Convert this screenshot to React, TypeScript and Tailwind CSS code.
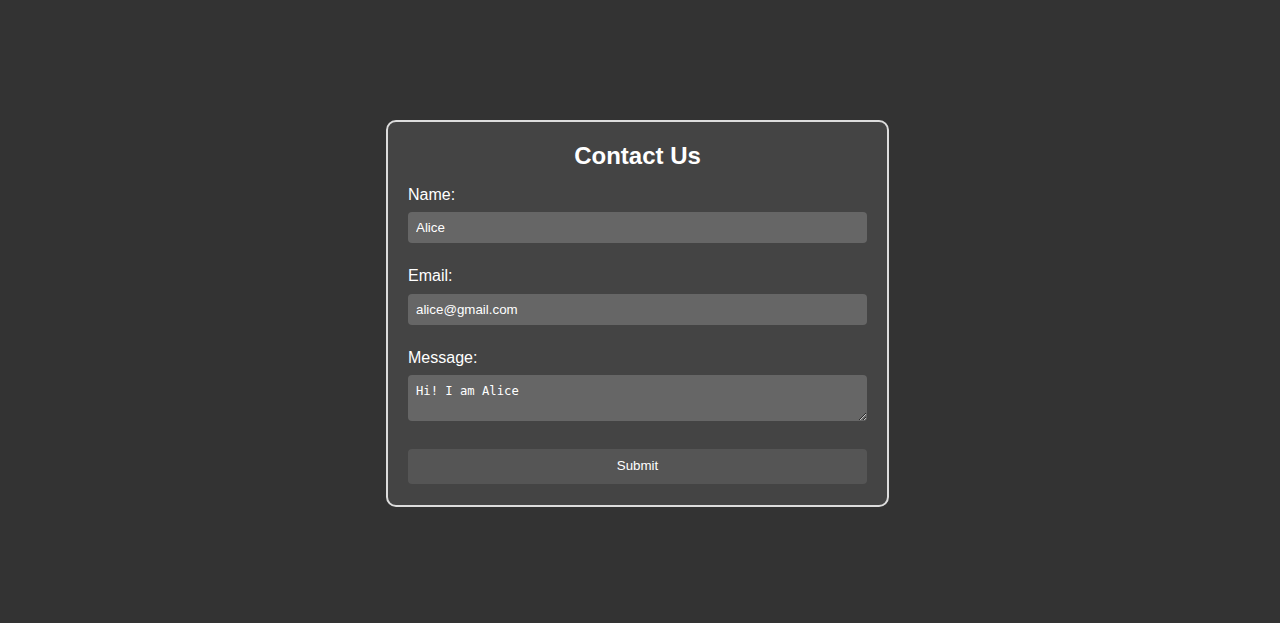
import { useState } from 'react'

export default function App() {
  const [name, setName] = useState('Alice')
  const [email, setEmail] = useState('alice@gmail.com')
  const [message, setMessage] = useState('Hi! I am Alice')

  return (
    <main className="min-h-screen bg-[#333333] flex items-center justify-center pr-[5px] pt-[4px] font-['Liberation_Sans',Arial,sans-serif]">
      <form
        className="w-[503px] bg-[#444444] border-2 border-[#dddddd] rounded-[10px] px-5 pt-5 pb-[21px] text-white"
        onSubmit={(e) => e.preventDefault()}
      >
        <h2 className="text-[24px] leading-[27.6px] font-bold text-center mb-4">Contact Us</h2>

        <label htmlFor="name" className="block text-[16px] leading-[18.4px] mb-2">Name:</label>
        <input
          id="name"
          type="text"
          value={name}
          onChange={(e) => setName(e.target.value)}
          className="block w-full h-[31px] px-2 mb-6 bg-[#666666] rounded-[4px] text-[13.33px] text-white outline-none"
        />

        <label htmlFor="email" className="block text-[16px] leading-[18.4px] mb-2">Email:</label>
        <input
          id="email"
          type="email"
          value={email}
          onChange={(e) => setEmail(e.target.value)}
          className="block w-full h-[31px] px-2 mb-6 bg-[#666666] rounded-[4px] text-[13.33px] text-white outline-none"
        />

        <label htmlFor="message" className="block text-[16px] leading-[18.4px] mb-2">Message:</label>
        <textarea
          id="message"
          rows={2}
          value={message}
          onChange={(e) => setMessage(e.target.value)}
          className="block w-full h-[46px] px-2 pt-[9px] pb-2 mb-7 bg-[#666666] rounded-[4px] text-[12.2px] leading-[15px] font-medium text-white outline-none font-['DejaVu_Sans_Mono',monospace]"
        />

        <button
          type="submit"
          className="block w-full h-[35px] bg-[#555555] rounded-[4px] text-[13.33px] text-white"
        >
          Submit
        </button>
      </form>
    </main>
  )
}
